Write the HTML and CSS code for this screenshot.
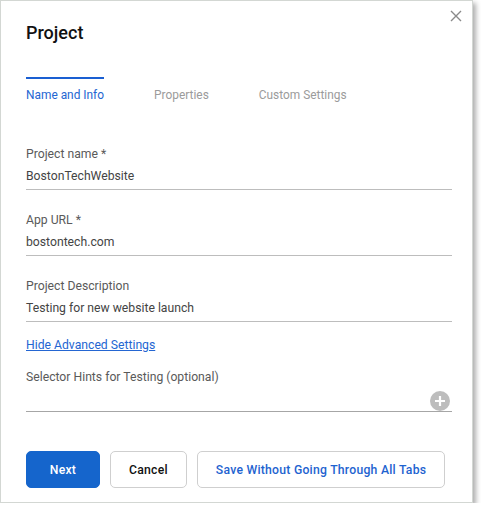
FILE: index.html
```html
<!DOCTYPE html>
<html>
<head>
<meta charset="utf-8">
<link rel="stylesheet" href="styles.css">
</head>
<body>
<div class="dialog">
  <button class="close" aria-label="Close">
    <svg width="12" height="12" viewBox="0 0 12 12"><path d="M1 1L11 11M11 1L1 11" stroke="#8a8a8a" stroke-width="1.4" fill="none"/></svg>
  </button>
  <h1 class="title">Project</h1>
  <div class="tabs">
    <div class="tab active">Name and Info</div>
    <div class="tab">Properties</div>
    <div class="tab">Custom Settings</div>
  </div>
  <div class="field first">
    <div class="label">Project name *</div>
    <div class="value">BostonTechWebsite</div>
  </div>
  <div class="field">
    <div class="label">App URL *</div>
    <div class="value">bostontech.com</div>
  </div>
  <div class="field">
    <div class="label">Project Description</div>
    <div class="value">Testing for new website launch</div>
  </div>
  <a class="link" href="#">Hide Advanced Settings</a>
  <div class="hints">
    <div class="label">Selector Hints for Testing (optional)</div>
    <div class="hint-input">
      <span class="plus">
        <svg width="20" height="20" viewBox="0 0 20 20"><circle cx="10" cy="10" r="10" fill="#bdbdbd"/><path d="M10 5v10M5 10h10" stroke="#fff" stroke-width="2.2"/></svg>
      </span>
    </div>
  </div>
  <div class="actions">
    <button class="btn primary">Next</button>
    <button class="btn">Cancel</button>
    <button class="btn secondary">Save Without Going Through All Tabs</button>
  </div>
</div>
</body>
</html>
```

FILE: styles.css
```css
* { box-sizing: border-box; }
body {
  margin: 0;
  background: #fff;
  font-family: Roboto, "Liberation Sans", Arial, sans-serif;
}
.dialog {
  position: relative;
  width: 473px;
  height: 503px;
  background: #fff;
  border: 1px solid #d3d7d3;
  box-shadow: 3px 3px 5px rgba(0, 0, 0, 0.32);
  padding: 20px 20px 0 25px;
}
.close {
  position: absolute;
  top: 9px;
  right: 10px;
  width: 12px;
  height: 12px;
  padding: 0;
  border: 0;
  background: none;
  display: flex;
}
.title {
  margin: 0;
  font-size: 18px;
  line-height: 24px;
  font-weight: 500;
  color: #111;
}
.tabs {
  display: flex;
  gap: 50px;
  margin-top: 32px;
}
.tab {
  font-size: 11.9px;
  line-height: 16px;
  color: #9b9b9b;
  border-top: 2px solid transparent;
  padding-top: 8px;
}
.tab.active {
  color: #2466d2;
  border-top-color: #1a5fd2;
}
.field {
  margin-top: 22px;
  border-bottom: 1px solid #bdbdbd;
  padding-bottom: 5px;
}
.field.first {
  margin-top: 43px;
}
.label {
  font-size: 12.2px;
  line-height: 16px;
  color: #5a5a5a;
}
.value {
  margin-top: 6px;
  font-size: 12.2px;
  line-height: 16px;
  color: #444;
}
.link {
  display: block;
  width: max-content;
  margin-top: 15px;
  font-size: 12.2px;
  line-height: 16px;
  color: #2466d2;
  text-decoration: underline;
}
.hints {
  margin-top: 16px;
}
.hint-input {
  display: flex;
  justify-content: flex-end;
  align-items: center;
  height: 27px;
  padding-top: 5px;
  padding-right: 2px;
  border-bottom: 1px solid #a6a6a6;
}
.plus { display: flex; }
.actions {
  display: flex;
  gap: 10px;
  margin-top: 39px;
}
.btn {
  flex: none;
  height: 37px;
  padding: 0 18px;
  border: 1px solid #cfcfcf;
  border-radius: 5px;
  background: #fff;
  font-family: inherit;
  font-size: 12.2px;
  font-weight: 500;
  letter-spacing: 0.25px;
  white-space: nowrap;
  color: #111;
}
.btn.primary {
  width: 74px;
  background: #1565cc;
  border-color: #1565cc;
  color: #fff;
}
.btn.secondary {
  color: #1e63d0;
}
```
